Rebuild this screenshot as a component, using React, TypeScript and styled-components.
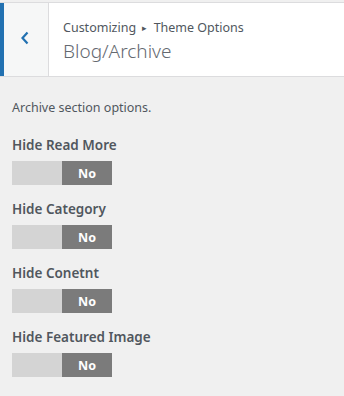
import React from 'react';
import styled, { createGlobalStyle } from 'styled-components';

const options = [
  'Hide Read More',
  'Hide Category',
  'Hide Conetnt',
  'Hide Featured Image',
];

const App = () => (
  <>
    <Global />
    <Panel>
      <Header>
        <Back>
          <svg width="10" height="14" viewBox="0 0 10 14">
            <path d="M7.5 1.5 L2.5 7 L7.5 12.5" fill="none" stroke="#2271b1" strokeWidth="2.2" />
          </svg>
        </Back>
        <Titles>
          <Crumb>
            Customizing <Arrow>▸</Arrow> Theme Options
          </Crumb>
          <Title>Blog/Archive</Title>
        </Titles>
      </Header>
      <Body>
        <Description>Archive section options.</Description>
        {options.map((label) => (
          <Control key={label}>
            <Label>{label}</Label>
            <Toggle>
              <Half />
              <Half active>No</Half>
            </Toggle>
          </Control>
        ))}
      </Body>
    </Panel>
  </>
);

export default App;

const Global = createGlobalStyle`
  body {
    margin: 0;
    background: #f0f0f0;
    font-family: "Noto Sans", "Open Sans", sans-serif;
  }
`;
const Panel = styled.div`
  width: 344px;
  height: 396px;
  padding-top: 2px;
  box-sizing: border-box;
  background: #f0f0f0;
`;
const Header = styled.div`
  display: flex;
  height: 73px;
  background: #fff;
  border-top: 1px solid #dcdcde;
  border-bottom: 1px solid #dcdcde;
`;
const Back = styled.div`
  width: 44px;
  display: flex;
  align-items: center;
  justify-content: center;
  background: #f6f7f7;
  border-left: 4px solid #2271b1;
  border-right: 1px solid #dcdcde;
  svg {
    margin-left: -2px;
    margin-top: -3px;
  }
`;
const Titles = styled.div`
  display: flex;
  flex-direction: column;
  justify-content: center;
  padding: 4px 0 0 14px;
`;
const Crumb = styled.div`
  font-size: 12.5px;
  color: #50575e;
  line-height: 18px;
`;
const Arrow = styled.span`
  font-size: 9px;
  padding: 0 3px;
  vertical-align: 1px;
`;
const Title = styled.div`
  font-size: 19px;
  color: #646970;
  line-height: 28px;
  font-weight: 300;
`;
const Body = styled.div`
  padding: 22px 12px 0;
`;
const Description = styled.div`
  font-size: 12.5px;
  color: #50575e;
  line-height: 18px;
  margin-bottom: 18px;
`;
const Control = styled.div`
  margin-bottom: 14px;
`;
const Label = styled.div`
  font-size: 13.5px;
  font-weight: 600;
  color: #50575e;
  line-height: 20px;
  margin-bottom: 6px;
`;
const Toggle = styled.div`
  display: flex;
  width: 100px;
  height: 24px;
`;
const Half = styled.div<{ active?: boolean }>`
  flex: 1;
  display: flex;
  align-items: center;
  justify-content: center;
  background: ${(p) => (p.active ? '#7b7b7b' : '#d4d4d4')};
  color: #fff;
  font-size: 12.5px;
  font-weight: 700;
`;
